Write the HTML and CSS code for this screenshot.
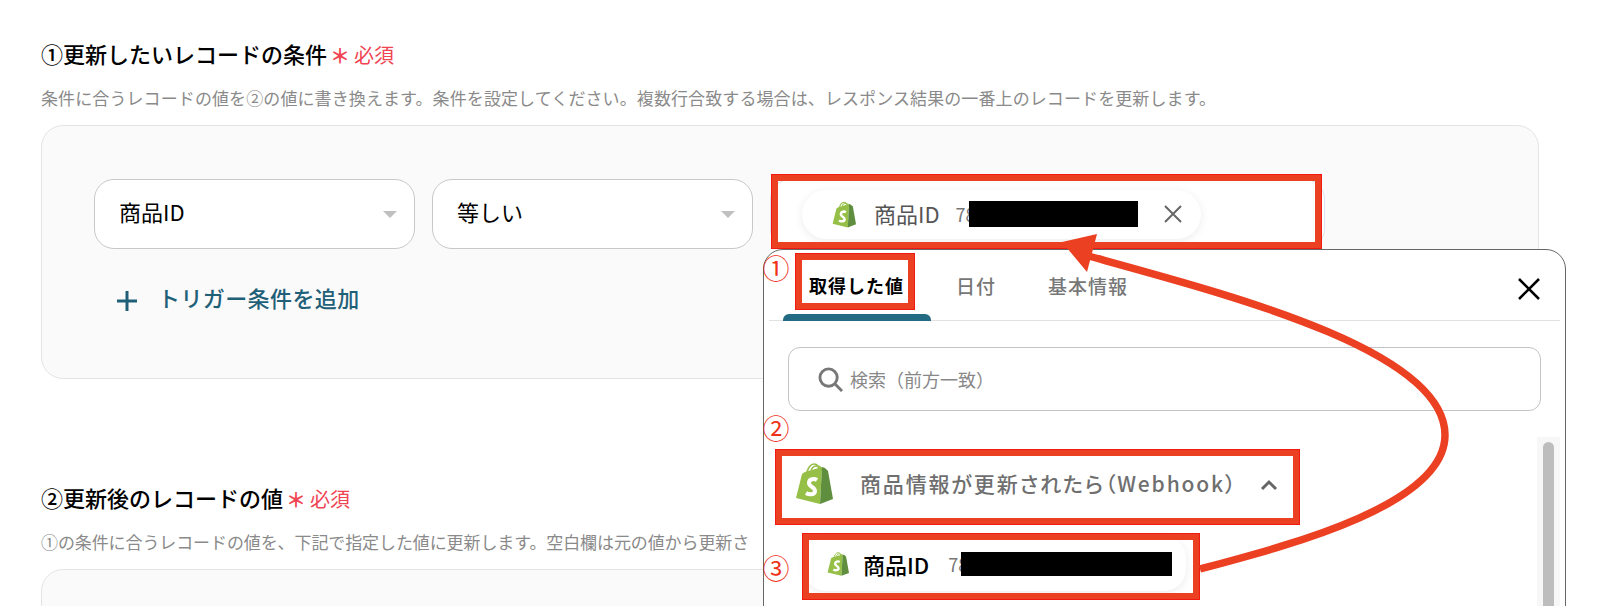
FILE: index.html
```html
<!DOCTYPE html>
<html lang="ja">
<head>
    <meta charset="UTF-8">
    <title>レコードを更新する</title>
    <link rel="stylesheet" href="styles.css">
</head>
<body>
    <svg class="defs" width="0" height="0">
        <symbol id="shopify" viewBox="0 0 38 41">
            <path d="M12 11C12 5 16 1 19 1C23 1 24 4 24 8M16 9C16 5 19 3 21 3C25 3 27 5 27 8" fill="none" stroke="#95bf47" stroke-width="1.6"/>
            <path d="M1 35L7 11Q8 10 10 9L27 4L25 41Z" fill="#95bf47"/>
            <path d="M27 4L30 5L33 8L38 36L25 41Z" fill="#5e8e3e"/>
            <path d="M22 17C19 15 14 16 14 20C14 24 20 24 20 28C20 32 14 32 11 30" fill="none" stroke="#fff" stroke-width="4"/>
        </symbol>
    </svg>

    <div class="page">
        <!-- 1: conditions -->
        <div class="section-head first">
            <h2>①更新したいレコードの条件</h2>
            <span class="star">＊</span><span class="required">必須</span>
        </div>
        <p class="note">条件に合うレコードの値を②の値に書き換えます。条件を設定してください。複数行合致する場合は、レスポンス結果の一番上のレコードを更新します。</p>
        <div class="panel">
            <div class="cond-row">
                <div class="select">商品ID<span class="caret"></span></div>
                <div class="select">等しい<span class="caret"></span></div>
                <div class="value-field">
                    <div class="chip">
                        <svg class="chip-logo"><use href="#shopify"/></svg>
                        <span class="chip-label">商品ID</span>
                        <span class="chip-value">78</span>
                        <span class="mask"></span>
                        <svg class="chip-x" viewBox="0 0 20 20"><path d="M2 2L18 18M18 2L2 18"/></svg>
                    </div>
                </div>
            </div>
            <div class="add-row">
                <svg class="plus" viewBox="0 0 22 22"><path d="M11 1V21M1 11H21"/></svg>
                <span>トリガー条件を追加</span>
            </div>
        </div>

        <!-- 2: new values -->
        <div class="section-head second">
            <h2>②更新後のレコードの値</h2>
            <span class="star">＊</span><span class="required">必須</span>
        </div>
        <p class="note note-tight">①の条件に合うレコードの値を、下記で指定した値に更新します。空白欄は元の値から更新さ</p>
        <div class="panel panel-open"></div>
    </div>

    <!-- value picker popup -->
    <div class="popup">
        <div class="tabs">
            <span class="tab active">取得した値</span>
            <span class="tab">日付</span>
            <span class="tab">基本情報</span>
            <svg class="popup-x" viewBox="0 0 24 24"><path d="M2 2L22 22M22 2L2 22"/></svg>
        </div>
        <div class="search">
            <svg class="search-icon" viewBox="0 0 26 26"><circle cx="11" cy="11" r="9"/><path d="M18 18L25 25"/></svg>
            <span>検索（前方一致）</span>
        </div>
        <div class="list">
            <div class="group">
                <svg class="group-logo"><use href="#shopify"/></svg>
                <span class="group-title">商品情報が更新されたら（Webhook）</span>
                <svg class="chevron" viewBox="0 0 18 12"><path d="M2 10L9 3L16 10"/></svg>
            </div>
            <div class="item">
                <svg class="item-logo"><use href="#shopify"/></svg>
                <span class="item-label">商品ID</span>
                <span class="chip-value item-value">78</span>
                <span class="mask mask-item"></span>
            </div>
            <div class="scrollbar"><div class="thumb"></div></div>
        </div>
    </div>

    <!-- annotations -->
    <div class="mark mark-field"></div>
    <div class="mark mark-tab"></div>
    <div class="mark mark-group"></div>
    <div class="mark mark-item-box"></div>
    <span class="num num-1">①</span>
    <span class="num num-2">②</span>
    <span class="num num-3">③</span>
    <svg class="arrow" width="1600" height="606" viewBox="0 0 1600 606">
        <path d="M1200 569C1290 545 1445 505 1445 435C1445 350 1230 295 1085 255" fill="none" stroke="#ec4023" stroke-width="7.5"/>
        <path d="M1062 242L1097 234L1087 272Z" fill="#ec4023"/>
    </svg>
</body>
</html>
```

FILE: styles.css
```css
* { box-sizing: border-box; }
html, body { height: 100%; }
body { margin: 0; background-color: #fff; color: #000; font-family: "Noto Sans CJK JP", "Noto Sans", sans-serif; overflow: hidden; position: relative; }
.defs { position: absolute; }

.page { padding: 0 61px 0 41px; height: 606px; overflow: hidden; }
.section-head { display: flex; align-items: center; height: 30px; padding-bottom: 4px; }
.section-head.first { margin-top: 40px; }
.section-head.second { margin-top: 105px; }
.section-head h2 { margin: 0; font-size: 22px; font-weight: 500; line-height: 30px; }
.star { color: #f04452; font-size: 20px; font-weight: 700; margin-left: 2px; margin-top: 5px; width: 22px; text-align: center; }
.required { color: #f04452; font-size: 20px; margin-left: 3px; margin-top: 2px; }
.note { margin: 14px 0 13px; height: 28px; line-height: 28px; font-size: 17px; color: #8a8a8a; letter-spacing: 0.1px; white-space: nowrap; }
.note-tight { letter-spacing: -0.1px; }

.panel { height: 254px; padding: 53px 0 0 52px; background-color: #fafafa; border: 1px solid #e2e4e8; border-radius: 22px; }
.panel-open { height: 120px; }
.cond-row { display: flex; align-items: center; gap: 17px; }
.select { position: relative; width: 321px; height: 70px; padding: 0 0 6px 24px; display: flex; align-items: center; font-size: 22px; background-color: #fff; border: 1.5px solid #c8c8c8; border-radius: 20px; }
.caret { position: absolute; right: 17px; top: 31px; border-left: 7px solid transparent; border-right: 7px solid transparent; border-top: 7px solid #c0c0c0; }
.value-field { width: 555px; height: 70px; padding-left: 31px; display: flex; align-items: center; background-color: #fff; border: 1.5px solid #dfe2ea; border-radius: 20px; }
.chip { width: 399px; height: 49px; padding-left: 30px; display: flex; align-items: center; background-color: #fff; border-radius: 25px; box-shadow: 0 2px 10px rgba(0, 0, 0, 0.08); }
.chip-logo { width: 24px; height: 27px; margin-right: 18px; flex: none; }
.chip-label { font-size: 22px; color: #555; padding-bottom: 2px; }
.chip-value { margin-left: 16px; font-size: 18px; color: #777; }
.mask { width: 169px; height: 26px; margin-left: -7px; background-color: #000; flex: none; }
.chip-x { width: 20px; height: 20px; margin-left: 25px; }
.chip-x path { fill: none; stroke: #666; stroke-width: 2; }

.add-row { display: flex; align-items: center; gap: 20px; margin: 32px 0 0 22px; color: #1f6078; font-size: 22px; font-weight: 500; letter-spacing: 0.4px; }
.plus { width: 22px; height: 22px; margin-top: 8px; }
.plus path { fill: none; stroke: #1f6078; stroke-width: 3; }

.popup { position: absolute; left: 763px; top: 249px; width: 803px; height: 400px; background-color: #fff; border: 1.5px solid #666; border-radius: 20px; }
.tabs { position: relative; height: 71px; margin: 0 5px; padding-left: 40px; display: flex; align-items: center; gap: 52px; border-bottom: 1.5px solid #e2e2e2; }
.tab { font-size: 19px; font-weight: 500; color: #777; letter-spacing: 1px; }
.tab.active { font-size: 18px; color: #000; font-weight: 700; }
.tab.active::after { content: ""; position: absolute; left: 14px; bottom: -1px; width: 148px; height: 7px; background-color: #236b83; border-radius: 6px 6px 0 0; }
.popup-x { position: absolute; right: 19px; top: 27px; width: 24px; height: 24px; }
.popup-x path { fill: none; stroke: #000; stroke-width: 2.5; }

.search { height: 64px; margin: 26px 24px 0 24px; padding-left: 29px; display: flex; align-items: center; gap: 7px; font-size: 18px; color: #888; border: 1.5px solid #c4c4c4; border-radius: 12px; }
.search-icon { width: 25px; height: 25px; }
.search-icon circle, .search-icon path { fill: none; stroke: #777; stroke-width: 3; }

.list { position: relative; height: 300px; margin-top: 26px; padding-top: 15px; }
.group { display: flex; align-items: center; height: 62px; margin-left: 31px; }
.group-logo { width: 38px; height: 41px; flex: none; }
.group-title { margin-left: 27px; font-size: 21px; font-weight: 500; color: #6f6f6f; letter-spacing: 1.85px; font-feature-settings: "palt"; }
.chevron { width: 18px; height: 12px; margin: 4px 0 0 23px; }
.chevron path { fill: none; stroke: #666; stroke-width: 3; }
.item { display: flex; align-items: center; height: 55px; margin: 22px 0 0 40px; width: 382px; padding-left: 23px; background-color: #fff; border-radius: 22px; box-shadow: 0 2px 8px rgba(0, 0, 0, 0.08); }
.item-logo { width: 22px; height: 26px; flex: none; }
.item-label { margin-left: 14px; font-size: 22px; font-weight: 500; }
.item-value { margin-left: 19px; }
.mask-item { width: 211px; height: 24px; }
.scrollbar { position: absolute; left: 773px; top: 0; width: 23px; height: 300px; padding: 5px 6px 0; background-color: #f7f7f7; }
.thumb { height: 280px; background-color: #bdbdbd; border-radius: 7px; }

/* red boxes drawn on top of the screenshot */
.mark { position: absolute; border: 7px solid #ec4023; outline: 1px solid #f01a10; outline-offset: -1px; }
.mark-field { left: 771px; top: 174px; width: 551px; height: 75px; }
.mark-tab { left: 795px; top: 253px; width: 120px; height: 57px; }
.mark-group { left: 775px; top: 449px; width: 525px; height: 76px; }
.mark-item-box { left: 802px; top: 533px; width: 398px; height: 67px; }
.num { position: absolute; left: 762px; width: 28px; text-align: center; color: #f0321a; font-size: 27px; line-height: 30px; }
.num-1 { top: 253px; }
.num-2 { top: 413px; }
.num-3 { top: 553px; }
.arrow { position: absolute; left: 0; top: 0; }
```
